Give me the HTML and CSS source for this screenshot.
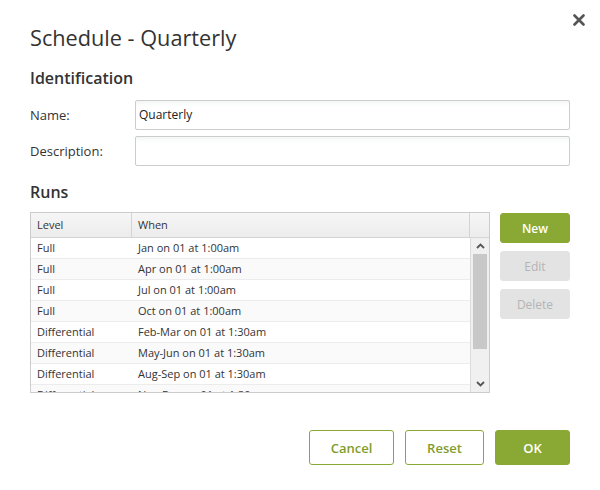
FILE: index.html
```html
<!DOCTYPE html>
<html>
<head>
<meta charset="utf-8">
<link rel="stylesheet" href="styles.css">
</head>
<body>
<div class="dialog">
  <button class="close" aria-label="Close">
    <svg width="12" height="12" viewBox="0 0 12 12"><path d="M1.5 1.5L10.5 10.5M10.5 1.5L1.5 10.5" stroke="#555" stroke-width="2.6" stroke-linecap="round"/></svg>
  </button>
  <h1 class="title">Schedule - Quarterly</h1>
  <h2 class="section">Identification</h2>
  <div class="field">
    <label class="label">Name:</label>
    <div class="input">Quarterly</div>
  </div>
  <div class="field">
    <label class="label">Description:</label>
    <div class="input"></div>
  </div>
  <h2 class="section runs-title">Runs</h2>
  <div class="runs">
    <div class="grid">
      <div class="head">
        <div class="hcell c-level">Level</div>
        <div class="hcell c-when">When</div>
        <div class="hcell c-pad"></div>
      </div>
      <div class="body">
        <div class="rows">
          <div class="row"><div class="c-level">Full</div><div class="c-when">Jan on 01 at 1:00am</div></div>
          <div class="row alt"><div class="c-level">Full</div><div class="c-when">Apr on 01 at 1:00am</div></div>
          <div class="row"><div class="c-level">Full</div><div class="c-when">Jul on 01 at 1:00am</div></div>
          <div class="row alt"><div class="c-level">Full</div><div class="c-when">Oct on 01 at 1:00am</div></div>
          <div class="row"><div class="c-level">Differential</div><div class="c-when">Feb-Mar on 01 at 1:30am</div></div>
          <div class="row alt"><div class="c-level">Differential</div><div class="c-when">May-Jun on 01 at 1:30am</div></div>
          <div class="row"><div class="c-level">Differential</div><div class="c-when">Aug-Sep on 01 at 1:30am</div></div>
          <div class="row alt"><div class="c-level">Differential</div><div class="c-when">Nov-Dec on 01 at 1:30am</div></div>
        </div>
        <div class="scrollbar">
          <div class="arrow">
            <svg width="9" height="6" viewBox="0 0 9 6"><path d="M1 5L4.5 1.5L8 5" fill="none" stroke="#555" stroke-width="1.8"/></svg>
          </div>
          <div class="track"><div class="thumb"></div></div>
          <div class="arrow">
            <svg width="9" height="6" viewBox="0 0 9 6"><path d="M1 1L4.5 4.5L8 1" fill="none" stroke="#555" stroke-width="1.8"/></svg>
          </div>
        </div>
      </div>
    </div>
    <div class="side">
      <button class="btn primary small">New</button>
      <button class="btn disabled small">Edit</button>
      <button class="btn disabled small">Delete</button>
    </div>
  </div>
  <div class="footer">
    <button class="btn outline cancel">Cancel</button>
    <button class="btn outline reset">Reset</button>
    <button class="btn primary ok">OK</button>
  </div>
</div>
</body>
</html>
```
FILE: styles.css
```css
* { box-sizing: border-box; }
html, body { margin: 0; padding: 0; background: #fff; }
body {
  font-family: "Open Sans", "Noto Sans", sans-serif;
  color: #333;
  width: 600px;
  height: 490px;
  overflow: hidden;
}
.dialog {
  position: relative;
  padding: 22px 30px 0 30px;
}
.close {
  position: absolute;
  top: 14px;
  right: 15px;
  width: 12px;
  height: 12px;
  padding: 0;
  border: 0;
  background: none;
  display: flex;
}
.title {
  margin: 0;
  font-size: 21.7px;
  font-weight: 400;
  line-height: 32px;
  color: #333;
}
.section {
  margin: 12px 0 0 0;
  font-size: 16px;
  font-weight: 600;
  line-height: 24px;
  color: #333;
}
.field {
  display: flex;
  align-items: center;
  margin-top: 10px;
}
.field + .field { margin-top: 6px; }
.label {
  width: 105px;
  font-size: 13px;
  color: #333;
}
.input {
  flex: 1;
  height: 30px;
  border: 1px solid #ccc;
  border-radius: 2px;
  background: linear-gradient(#f4f6f6, #fff 6px);
  font-size: 12px;
  line-height: 27px;
  padding: 0 3px;
  color: #222;
}
.runs-title { margin-top: 14px; }
.runs {
  display: flex;
  gap: 10px;
  margin-top: 8px;
}
.grid {
  width: 460px;
  height: 181px;
  border: 1px solid #ccc;
  display: flex;
  flex-direction: column;
  overflow: hidden;
  font-size: 11px;
  color: #333;
}
.head {
  display: flex;
  height: 25px;
  flex: none;
  background: linear-gradient(#f6f6f6, #ececec);
  border-bottom: 1px solid #d4d4d4;
}
.hcell {
  line-height: 24px;
  padding-left: 6px;
}
.head .c-level { width: 101px; border-right: 1px solid #d4d4d4; }
.head .c-when { flex: 1; }
.head .c-pad { width: 20px; padding: 0; border-left: 1px solid #d4d4d4; }
.body {
  flex: 1;
  display: flex;
  min-height: 0;
}
.rows {
  flex: 1;
  overflow: hidden;
}
.row {
  display: flex;
  height: 21px;
  line-height: 20px;
  border-bottom: 1px solid #ececec;
  background: #fff;
  white-space: nowrap;
}
.row.alt { background: #fafafa; }
.row .c-level { width: 101px; padding-left: 6px; }
.row .c-when { flex: 1; padding-left: 6px; }
.scrollbar {
  width: 19px;
  flex: none;
  display: flex;
  flex-direction: column;
  background: #f0f0f0;
  border-left: 1px solid #dcdcdc;
}
.arrow {
  height: 16px;
  display: flex;
  align-items: center;
  justify-content: center;
  flex: none;
}
.track {
  flex: 1;
  padding: 0 2px;
}
.thumb {
  height: 95px;
  background: #c8c8c8;
}
.side {
  display: flex;
  flex-direction: column;
  gap: 8px;
  padding-top: 1px;
}
.btn {
  font-family: "Open Sans", "Noto Sans", sans-serif;
  font-weight: 600;
  border-radius: 3px;
  padding: 0;
  cursor: default;
}
.btn.small {
  width: 70px;
  height: 30px;
  font-size: 12px;
}
.primary {
  background: #8aa934;
  border: 1px solid #8aa934;
  color: #fff;
}
.disabled {
  background: #e3e3e3;
  border: 1px solid #e3e3e3;
  color: #b4b4b4;
  font-weight: 400;
}
.outline {
  background: #fff;
  border: 1px solid #8aa934;
  color: #7f9c2e;
}
.footer {
  display: flex;
  justify-content: flex-end;
  gap: 11px;
  margin-top: 37px;
}
.footer .btn {
  height: 35px;
  font-size: 13px;
}
.cancel { width: 85px; }
.reset { width: 79px; }
.ok { width: 75px; }
```
